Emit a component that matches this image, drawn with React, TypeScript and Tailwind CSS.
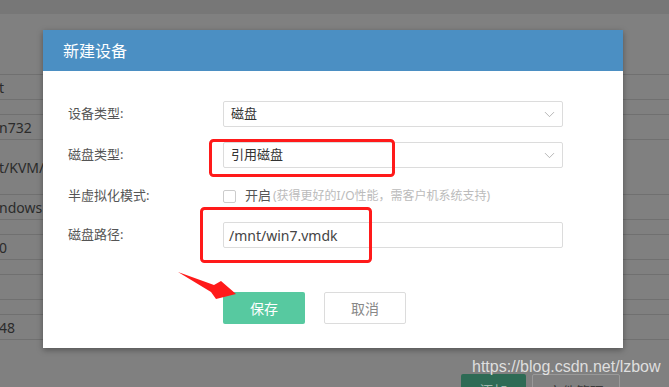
import { ChevronDown } from "lucide-react";

const font = { fontFamily: '"Noto Sans", "Noto Sans CJK SC", sans-serif' };

const bgRows = [
  { h: "h-[25px]", text: "t" },
  { h: "h-[15px]", text: "" },
  { h: "h-[25px]", text: "n732" },
  { h: "h-[55px]", text: "t/KVM/" },
  { h: "h-[25px]", text: "ndows" },
  { h: "h-[15px]", text: "" },
  { h: "h-[25px]", text: "0" },
  { h: "h-[15px]", text: "" },
  { h: "h-[25px]", text: "" },
  { h: "h-[15px]", text: "" },
  { h: "h-[25px]", text: "48" },
];

const SelectBox = ({ value }: { value: string }) => (
  <div className="w-[340px] h-[26px] border border-[#dcdcdc] rounded-[2px] bg-white flex items-center justify-between pl-[7px] pr-[4px]">
    <span className="text-[13px] text-[#333]">{value}</span>
    <ChevronDown className="w-[17px] h-[17px] text-[#999]" strokeWidth={1} />
  </div>
);

export default function App() {
  return (
    <div className="relative w-[669px] h-[387px] overflow-hidden bg-[#808080]" style={font}>
      {/* page behind the overlay */}
      <div className="h-[14px] bg-[#777777]" />
      <div className="h-[60px]" />
      <div className="border-t border-[#707070]">
        {bgRows.map((r, i) => (
          <div key={i} className={`${r.h} border-b border-[#707070] flex items-center text-[14px] text-[#2b2b2b] -ml-[1px]`}>
            {r.text}
          </div>
        ))}
      </div>
      <div className="flex justify-end gap-[6px] pr-[49px] mt-[34px]">
        <div className="w-[65px] h-[30px] bg-[#2e6b55] rounded-[2px] flex justify-center pt-[6px] text-[14px] text-[#9fb8ad]">添加</div>
        <div className="w-[88px] h-[30px] border border-[#999] rounded-[2px] flex justify-center pt-[6px] text-[14px] text-[#3a3a3a]">文件管理</div>
      </div>

      {/* modal */}
      <div className="absolute left-[43px] top-[30px] w-[580px] bg-white shadow-[0_2px_6px_rgba(0,0,0,0.35)]">
        <div className="h-[41px] bg-[#4b8fc3] flex items-center pl-[20px] text-[16px] text-white">新建设备</div>
        <div className="pl-[25px] pt-[30px] pb-[24px]">
          <div className="flex items-center">
            <div className="w-[155px] text-[13px] text-[#555]">设备类型:</div>
            <SelectBox value="磁盘" />
          </div>
          <div className="flex items-center mt-[15px]">
            <div className="w-[155px] text-[13px] text-[#555]">磁盘类型:</div>
            <SelectBox value="引用磁盘" />
          </div>
          <div className="flex items-center mt-[15px] h-[26px]">
            <div className="w-[155px] text-[13px] text-[#555]">半虚拟化模式:</div>
            <div className="w-[13px] h-[13px] border border-[#ccc] rounded-[2px]" />
            <span className="ml-[9px] text-[13px] text-[#555]">开启</span>
            <span className="ml-[2px] text-[12px] text-[#bbb]">(获得更好的I/O性能，需客户机系统支持)</span>
          </div>
          <div className="flex items-center mt-[13px]">
            <div className="w-[155px] text-[13px] text-[#555]">磁盘路径:</div>
            <div className="w-[340px] h-[26px] border border-[#dcdcdc] rounded-[2px] flex items-center pl-[5px] text-[14px] text-[#444]">
              /mnt/win7.vmdk
            </div>
          </div>
          <div className="flex mt-[44px] pl-[155px] gap-[19px]">
            <button className="w-[82px] h-[32px] bg-[#57c9a0] rounded-[2px] text-white text-[14px]">保存</button>
            <button className="w-[82px] h-[32px] border border-[#dcdcdc] rounded-[2px] bg-white text-[#888] text-[14px]">取消</button>
          </div>
        </div>
      </div>

      {/* watermark */}
      <div
        className="absolute left-[472px] top-[357px] text-[16px] leading-[20px] text-[rgba(255,255,255,0.75)]"
        style={{ fontFamily: '"Liberation Sans", Arial, sans-serif' }}
      >
        https://blog.csdn.net/lzbow
      </div>

      {/* red annotations */}
      <svg className="absolute left-0 top-0 pointer-events-none" width="669" height="387">
        <rect x="210.5" y="140.5" width="183" height="35" rx="3" fill="none" stroke="#ff1a1a" strokeWidth="3" />
        <rect x="201.5" y="208.5" width="169" height="53" rx="3" fill="none" stroke="#ff1a1a" strokeWidth="3" />
        <polygon points="178,272 214,285 221,281 236,294 216,299 211,292" fill="#ff1a1a" />
      </svg>
    </div>
  );
}
